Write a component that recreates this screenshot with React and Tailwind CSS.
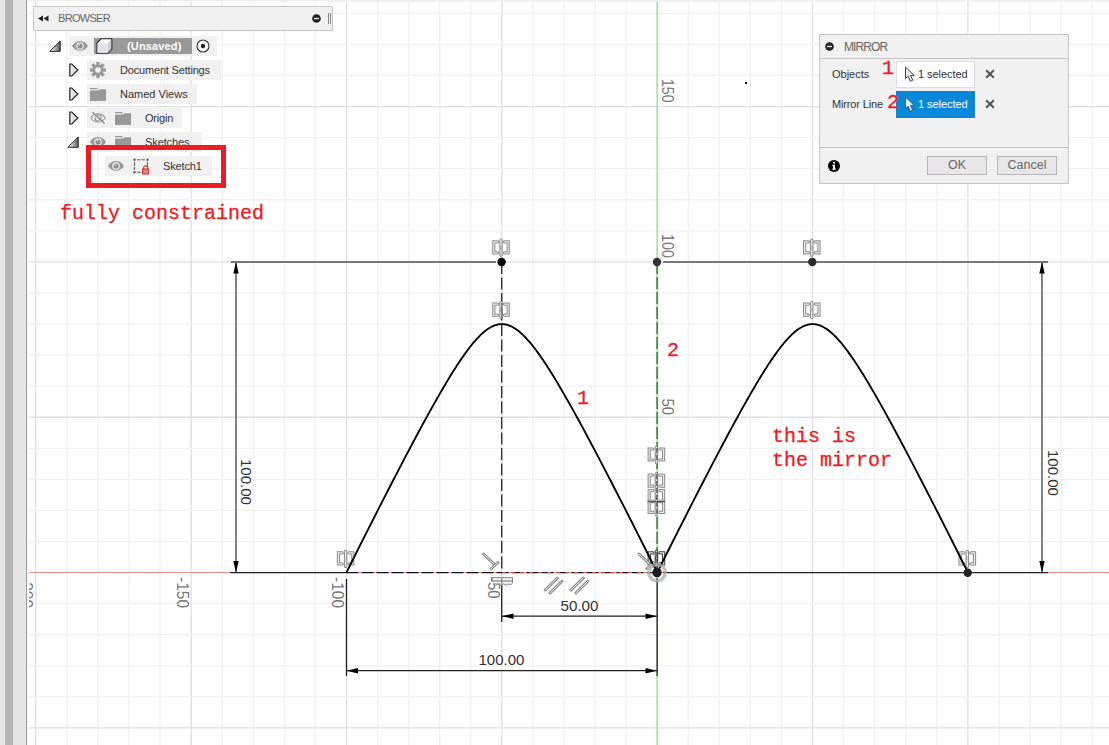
import React from "react";

const CX = 657.2;
const CY = 572.6;
const STEP = 31.07;

function conic(cx) {
  const p0 = [cx - 155.4, CY];
  const p1 = [cx, 262];
  const p2 = [cx + 155.4, CY];
  const w = 4;
  const pts = [];
  for (let i = 0; i <= 160; i++) {
    const t = i / 160;
    const a = (1 - t) * (1 - t);
    const b = 2 * w * t * (1 - t);
    const c = t * t;
    const d = a + b + c;
    pts.push(
      ((a * p0[0] + b * p1[0] + c * p2[0]) / d).toFixed(2) + "," + ((a * p0[1] + b * p1[1] + c * p2[1]) / d).toFixed(2)
    );
  }
  return pts.join(" ");
}

function Grid() {
  const lines = [];
  for (let i = -20; i <= 14; i++) {
    const x = CX + i * STEP;
    if (x > 29 && i !== 0)
      lines.push(<line key={"v" + i} x1={x} x2={x} y1="2" y2="745" stroke={i % 5 === 0 ? "#dfdfdf" : "#f1f1f1"} strokeWidth="1.3" />);
  }
  for (let i = -18; i <= 5; i++) {
    const y = CY + i * STEP;
    if (i !== 0)
      lines.push(<line key={"h" + i} x1="29" x2="1109" y1={y} y2={y} stroke={i % 5 === 0 ? "#dfdfdf" : "#f1f1f1"} strokeWidth="1.3" />);
  }
  return <g>{lines}</g>;
}

function Hollow({ d, dark, wide = 3.4, cap = "round" }) {
  return (
    <g fill="none" strokeLinecap={cap} strokeLinejoin="miter">
      <path d={d} stroke={dark ? "#3c3c3c" : "#8c8c8c"} strokeWidth={wide} />
      <path d={d} stroke="#e9e9e9" strokeWidth={wide - 2} />
    </g>
  );
}

function Symmetry({ x, y, dark }) {
  return (
    <g transform={`translate(${x} ${y})`}>
      <Hollow dark={dark} wide={3.2} d="M-3.4 -5.7H-7.2V5.3H-3.4M3.4 -5.7H7.2V5.3H3.4" />
      <Hollow dark={dark} d="M0 -7.2V7.8" />
      <circle r="1.2" cy="0" fill="none" stroke={dark ? "#333" : "#999"} strokeWidth=".7" />
    </g>
  );
}

function Arrow({ x, y, r }) {
  return <path transform={`translate(${x} ${y}) rotate(${r})`} d="M0 0L-11.5 -2.7V2.7Z" fill="#000" />;
}

function Label({ x, y, len, children, size = 16.2, fill = "#777", rotate = 90 }) {
  return (
    <text
      transform={`translate(${x} ${y}) rotate(${rotate})`}
      fontFamily="'Liberation Sans', sans-serif"
      fontSize={size}
      fill={fill}
      textLength={len}
      lengthAdjust="spacingAndGlyphs"
    >
      {children}
    </text>
  );
}

function Sketch() {
  return (
    <svg className="absolute inset-0" width="1080" height="745" viewBox="29 0 1080 745">
      <Grid />
      <line x1="29" x2="1109" y1="572.5" y2="572.5" stroke="#ee8a86" />
      <line x1="657.2" x2="657.2" y1="2" y2="745" stroke="#9ce79c" strokeWidth="1.6" />

      <Label x="661.5" y="79" len="23.5">150</Label>
      <Label x="661.5" y="234" len="24">100</Label>
      <Label x="661.5" y="398.5" len="16.5">50</Label>
      <Label x="176.7" y="577" len="31">-150</Label>
      <Label x="332" y="577" len="31">-100</Label>
      <Label x="487.5" y="577" len="21.5">-50</Label>
      <Label x="21.2" y="577" len="31">-200</Label>

      <g stroke="#777" strokeWidth="1.8">
        <path d="M231 262H496M663 262H1048M236 262V572M1042 262V572" />
      </g>
      <g stroke="#222" strokeWidth="1.3">
        <path d="M230 572.6H346.5M663 572.6H1048M346.5 579V676M346.5 670.7H657M501.7 578V622M501.7 616.2H657" />
        <path d="M657.2 578V676" stroke="#444" strokeWidth="1.6" />
      </g>
      <Arrow x="236" y="262" r="-90" />
      <Arrow x="236" y="572.5" r="90" />
      <Arrow x="1042" y="262" r="-90" />
      <Arrow x="1042" y="572.5" r="90" />
      <Arrow x="346.5" y="670.7" r="180" />
      <Arrow x="657" y="670.7" r="0" />
      <Arrow x="502" y="616.2" r="180" />
      <Arrow x="657" y="616.2" r="0" />

      <line x1="501.7" x2="501.7" y1="262" y2="572" stroke="#333" strokeWidth="1.4" strokeDasharray="12 3.5" />
      <line x1="657.2" x2="657.2" y1="262" y2="572" stroke="#4c8550" strokeWidth="1.8" strokeDasharray="12 3" />

      <Symmetry x="501" y="247.5" />
      <Symmetry x="501" y="309.8" />
      <Symmetry x="811.8" y="247.5" />
      <Symmetry x="811.8" y="309.8" />
      <Symmetry x="345.6" y="558.6" />
      <Symmetry x="967.3" y="558.6" />
      <Symmetry x="656.4" y="454.7" />
      <Symmetry x="656.4" y="480.9" />
      <Symmetry x="656.4" y="496.3" />
      <Symmetry x="656.4" y="507" />
      <Symmetry x="656.4" y="558.6" dark />
      <path d="M648 501.7H665" stroke="#444" />
      <path d="M501.7 303V318" stroke="#555" strokeWidth=".8" />
      <path d="M656.8 448V462M656.8 474V515M656.8 552V567" stroke="#333" strokeWidth=".9" strokeDasharray="5 2" />

      <Hollow d="M483.5 554L493.5 563.5M491.3 568.5L498 562.5" wide={3} />
      <Hollow d="M639 554L649 563.5M646.8 568.5L653.5 562.5" wide={3} />
      <Hollow d="M545.2 590L557.5 578M550 593L562 581.3" wide={3} />
      <Hollow d="M571 590L583.3 578M575.8 593L587.8 581.3" wide={3} />
      <path d="M491.5 577.5H512.5V583Q511 586.5 508.5 584Q506 586.8 503.5 584Q501 586.8 498.5 584Q496 586.8 493.5 584" fill="#e3e3e3" fillOpacity=".6" stroke="#8c8c8c" />
      <path d="M491.5 577.5V581H512.5" fill="none" stroke="#777" strokeWidth="1.2" />

      <line x1="346.5" x2="657" y1="572.6" y2="572.6" stroke="#111" strokeWidth="1.3" strokeDasharray="12 3" />
      <line x1="502" x2="657" y1="572.5" y2="572.5" stroke="#b4504e" strokeDasharray="4 5" />

      <g fill="none" stroke="#000" strokeWidth="1.85">
        <polyline points={conic(501.8)} />
        <polyline points={conic(812.6)} />
      </g>

      <circle cx="657" cy="572.6" r="8.2" fill="none" stroke="#a8a8a8" strokeOpacity=".7" strokeWidth="3.6" />
      <circle cx="657" cy="572.6" r="4.7" fill="#1d1a26" />
      <circle cx="501.6" cy="262" r="4.2" fill="#000" />
      <circle cx="657" cy="262" r="4.2" fill="#333" />
      <circle cx="812.3" cy="262" r="4.2" fill="#2b2b2b" />
      <circle cx="967.7" cy="572.7" r="4.2" fill="#222" />
      <rect x="745" y="82" width="2" height="2" fill="#111" />

      <Label x="560.5" y="611" len="38" size={15.5} fill="#333" rotate={0}>50.00</Label>
      <Label x="478.5" y="665.3" len="46" size={15.5} fill="#333" rotate={0}>100.00</Label>
      <Label x="241.3" y="459" len="46" size={15.5} fill="#333">100.00</Label>
      <Label x="1047.5" y="450" len="46" size={15.5} fill="#333">100.00</Label>
    </svg>
  );
}

function Eye({ off }) {
  return (
    <svg width="16" height="12" viewBox="0 0 16 12" className="shrink-0">
      {off ? (
        <g fill="none" stroke="#999" strokeWidth="1.1">
          <path d="M.8 6C4 .5 12 .5 15.2 6C12 11.2 4 11.2 .8 6Z" />
          <circle cx="8" cy="6" r="3" />
          <path d="M2 .3L14 11.7" stroke="#f1f1f1" strokeWidth="1.8" />
          <path d="M2.5 .3L14.5 11.5" stroke="#777" />
        </g>
      ) : (
        <g>
          <path d="M0 6C3.5 -.6 12.5 -.6 16 6C12.5 12.4 3.5 12.4 0 6Z" fill="#999" />
          <circle cx="8" cy="6" r="3.8" fill="#f1f1f1" />
          <circle cx="8" cy="6" r="2.6" fill="#8c8c8c" />
          <circle cx="7.2" cy="5" r=".8" fill="#eee" />
        </g>
      )}
    </svg>
  );
}

function Folder() {
  return (
    <svg width="16" height="13" viewBox="0 0 16 13" className="block shrink-0">
      <path d="M0 0H7L8 1.2H0ZM0 2.4H8.2L9.6 1.2H16V13H0Z" fill="#999" />
    </svg>
  );
}

function Gear() {
  return (
    <svg width="16" height="16" viewBox="-8 -8 16 16" className="shrink-0">
      <g fill="#999">
        {[0, 45, 90, 135].map((a) => (
          <rect key={a} x="-1.7" y="-8" width="3.4" height="16" transform={`rotate(${a})`} />
        ))}
        <circle r="5.6" />
      </g>
      <circle r="2.8" fill="#f1f1f1" />
    </svg>
  );
}

function Open() {
  return (
    <svg width="12" height="12" viewBox="0 0 12 12" className="shrink-0">
      <defs>
        <linearGradient id="tri" x1="0" x2="1" y1="0" y2="0">
          <stop offset=".2" stopColor="#eee" />
          <stop offset="1" stopColor="#555" />
        </linearGradient>
      </defs>
      <path d="M11.2 1V11.3H.9Z" fill="url(#tri)" stroke="#222" strokeWidth="1" />
    </svg>
  );
}

function Closed() {
  return (
    <svg width="10" height="14" viewBox="0 0 10 14" className="shrink-0">
      <path d="M.8 1H2.8L8.8 7L2.8 13H.8Z" fill="#e6e6e6" stroke="#222" strokeWidth="1.2" />
    </svg>
  );
}

function Cube() {
  return (
    <svg width="17" height="16" viewBox="0 0 17 16" className="shrink-0">
      <path d="M1 5L5 .8H15.8V11L12 15.2H1Z" fill="#fff" stroke="#222" strokeWidth="1.1" strokeLinejoin="round" />
      <path d="M1.6 5.2H11.6V14.6H1.6Z" fill="#e2e4e9" />
      <path d="M11.9 5.2L15.2 1.6V10.8L11.9 14.4Z" fill="#c8cace" />
    </svg>
  );
}

function SketchIcon() {
  return (
    <svg width="17" height="17" viewBox="0 0 17 17" className="block shrink-0">
      <path d="M4 1.7H7.5M8.5 1.7H12M1.5 4V8M1.5 9V12M14.5 4V8M4 14.3H8" fill="none" stroke="#666" strokeWidth="1.1" />
      <path d="M.5 .7h2v2h-2zM13.5 .7h2v2h-2zM.5 13.3h2v2h-2z" fill="#444" />
      <path d="M10.7 11V9.8a2 2 0 0 1 4 0V11" fill="none" stroke="#c8322f" strokeWidth="1.2" />
      <rect x="9.5" y="11" width="6.3" height="5" fill="#e08480" stroke="#c8322f" />
    </svg>
  );
}

function Minus({ size = 9 }) {
  return (
    <svg width={size} height={size} viewBox="0 0 10 10" className="shrink-0">
      <circle cx="5" cy="5" r="4.8" fill="#222" />
      <path d="M2.3 5H7.7" stroke="#fff" strokeWidth="1.4" />
    </svg>
  );
}

function Cursor({ light }) {
  return (
    <svg width="12" height="17" viewBox="0 0 12 17" className="shrink-0">
      <path
        d="M1.5 1V12.5L4.2 10.2L6.4 15.3L8.8 14.2L6.6 9.5H10.3Z"
        fill={light ? "#e6f0fa" : "#e8e8e8"}
        stroke={light ? "#3a5a78" : "#444"}
        strokeWidth="1"
      />
    </svg>
  );
}

function Clear() {
  return (
    <svg width="10" height="10" viewBox="0 0 10 10" className="shrink-0">
      <path d="M1.2 1.2L8.8 8.8M8.8 1.2L1.2 8.8" stroke="#555" strokeWidth="2" />
    </svg>
  );
}

function Row({ indent, marker, box, children }) {
  return (
    <div className={"flex h-6 items-center " + indent}>
      <div className="flex w-[18px] shrink-0 items-center">{marker}</div>
      <div className={"flex h-5 items-center bg-[#f1f1f1] " + box}>{children}</div>
    </div>
  );
}

function Browser() {
  return (
    <aside className="mt-[6px] ml-1 w-[300px] text-[11px] text-[#333]">
      <div className="flex h-[25px] items-center border border-[#c6c6c6] bg-[#f1f1f1] pr-px pl-1">
        <svg width="11" height="7" viewBox="0 0 11 7">
          <path d="M5 .5V6.5L0 3.5ZM10.5 .5V6.5L5.5 3.5Z" fill="#222" />
        </svg>
        <span className="ml-[9px] text-[11px] tracking-[-0.7px] text-[#666] [word-spacing:0] [font-size:12px]">BROWSER</span>
        <span className="mr-[7px] ml-auto">
          <Minus />
        </span>
        <span className="h-[11px] w-[3px] border-x border-[#888]" />
      </div>
      <div className="pt-[3px]">
        <Row indent="pl-4" marker={<Open />} box="ml-[2px] w-[148px] pl-[3px]">
          <Eye />
          <div className="ml-[6px] flex h-4 w-[98px] items-center bg-[#999] pl-[2px]">
            <Cube />
            <span className="ml-[14px] text-[11px] font-bold tracking-[0.15px] text-white">(Unsaved)</span>
          </div>
          <svg width="14" height="14" viewBox="0 0 14 14" className="ml-1">
            <circle cx="7" cy="7" r="6" fill="#fafafa" stroke="#333" strokeWidth="1.1" />
            <circle cx="7" cy="7" r="2.2" fill="#222" />
          </svg>
        </Row>
        <Row indent="pl-9" marker={<Closed />} box="w-[134px] pl-[3px]">
          <Gear />
          <span className="ml-[14px] tracking-[-0.18px] whitespace-nowrap">Document Settings</span>
        </Row>
        <Row indent="pl-9" marker={<Closed />} box="w-[110px] pl-[3px]">
          <Folder />
          <span className="ml-[14px]">Named Views</span>
        </Row>
        <Row indent="pl-9" marker={<Closed />} box="w-[95px] pl-[3px]">
          <Eye off />
          <span className="ml-[9px]"><Folder /></span>
          <span className="ml-[14px] tracking-[-0.2px]">Origin</span>
        </Row>
        <Row indent="pl-[34px]" marker={<Open />} box="ml-[2px] w-[115px] pl-[3px]">
          <Eye />
          <span className="ml-[9px]"><Folder /></span>
          <span className="ml-[14px] tracking-[-0.1px]">Sketches</span>
        </Row>
        <Row indent="pl-[54px]" box="w-[107px] pl-[3px]">
          <Eye />
          <span className="ml-[9px]"><SketchIcon /></span>
          <span className="ml-[13px] tracking-[-0.15px]">Sketch1</span>
        </Row>
      </div>
    </aside>
  );
}

function Mirror() {
  return (
    <section className="mt-[34px] mr-10 ml-auto flex h-[150px] w-[250px] flex-col border border-[#c6c6c6] bg-[#f1f1f1] text-[11px] text-[#333]">
      <header className="flex h-6 items-center border-b border-[#c6c6c6] pl-[5px]">
        <Minus />
        <span className="ml-[10px] text-[12px] tracking-[-0.9px] text-[#666]">MIRROR</span>
      </header>
      <div className="flex h-[89px] flex-col gap-[2px] border-b border-[#c6c6c6] pt-[1px] pl-3">
        <div className="flex h-7 items-center">
          <span className="w-16">Objects</span>
          <div className="flex h-[27px] w-[79px] items-center border border-[#ddd] bg-white pl-[7px]">
            <Cursor />
            <span className="ml-[2px] tracking-[-0.05px] whitespace-nowrap">1 selected</span>
          </div>
          <span className="ml-[10px]"><Clear /></span>
        </div>
        <div className="flex h-7 items-center">
          <span className="w-16 tracking-[-0.15px] whitespace-nowrap">Mirror Line</span>
          <div className="flex h-[27px] w-[79px] items-center border border-[#1a7fc4] bg-[#0788d8] pl-[7px] text-white">
            <Cursor light />
            <span className="ml-[2px] tracking-[-0.05px] whitespace-nowrap">1 selected</span>
          </div>
          <span className="ml-[10px]"><Clear /></span>
        </div>
      </div>
      <footer className="flex flex-1 items-center pr-[11px] pl-2">
        <svg width="12" height="12" viewBox="0 0 12 12">
          <circle cx="6" cy="6" r="6" fill="#000" />
          <path d="M5 2h2v1.6H5zM4.4 4.8H7V8.6h.8V9.8H4.3V8.6H5V6h-.6z" fill="#fff" />
        </svg>
        <button className="ml-auto h-[19px] w-[60px] border border-[#b5b5b5] bg-[#e8e6e8] text-[12.5px] leading-[17px] text-[#666]">OK</button>
        <button className="ml-[10px] h-[19px] w-[60px] border border-[#b5b5b5] bg-[#e8e6e8] text-[12.5px] leading-[17px] text-[#666]">Cancel</button>
      </footer>
    </section>
  );
}

function Note({ className, children }) {
  return (
    <div
      className={
        "absolute font-['Liberation_Mono',monospace] text-[20px] leading-6 whitespace-pre text-[#ed1c24] [-webkit-text-stroke:0.3px_#ed1c24] " +
        className
      }
    >
      {children}
    </div>
  );
}

export default function App() {
  return (
    <div className="flex h-[745px] w-[1109px] overflow-hidden bg-white font-['Liberation_Sans',sans-serif]">
      <div className="w-[5px] shrink-0 bg-[#e6e6e6]" />
      <div className="w-2 shrink-0 bg-[#b5b5b5]" />
      <div className="w-[14px] shrink-0 border-r border-[#999] bg-[#e6e6e6]" />
      <div className="w-[2px] shrink-0 bg-[#fafafa]" />
      <main className="relative flex-1 overflow-hidden">
        <Sketch />
        <div className="relative flex h-full flex-col">
          <div className="h-[2px] shrink-0 bg-[#f1f1f1]" />
          <div className="-mt-[2px] flex items-start">
            <Browser />
            <Mirror />
          </div>
        </div>
        <div className="absolute top-[145px] left-[57px] h-[43px] w-[140px] border-[5px] border-[#ed1c24]" />
        <Note className="top-[202px] left-[31px]">fully constrained</Note>
        <Note className="top-[387px] left-[548px]">1</Note>
        <Note className="top-[339px] left-[638px]">2</Note>
        <Note className="top-[425px] left-[743px]">{"this is\nthe mirror"}</Note>
        <Note className="top-[57px] left-[853px]">1</Note>
        <Note className="top-[91px] left-[858px]">2</Note>
      </main>
    </div>
  );
}
